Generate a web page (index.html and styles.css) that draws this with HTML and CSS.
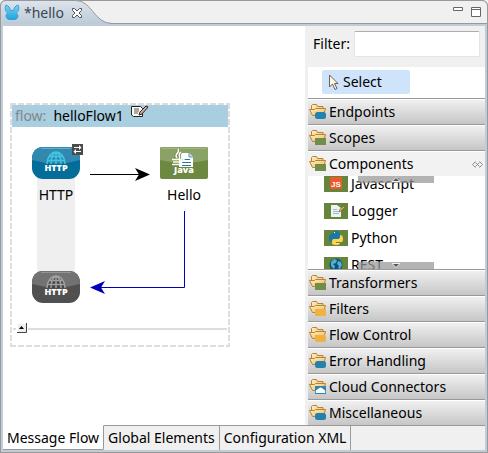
FILE: index.html
```html
<!DOCTYPE html>
<html lang="en">
<head>
<meta charset="utf-8">
<title>hello</title>
<link rel="stylesheet" href="styles.css">
</head>
<body>
<svg class="defs" aria-hidden="true">
  <defs>
    <linearGradient id="folderFill" x1="0" y1="0" x2="1" y2="1"><stop offset="0" stop-color="#fff0c4"/><stop offset="1" stop-color="#ecb95e"/></linearGradient>
    <linearGradient id="tabFill" x1="0" y1="0" x2="0" y2="1"><stop offset="0" stop-color="#dde4ec"/><stop offset="1" stop-color="#bccad8"/></linearGradient>
    <linearGradient id="muleFill" x1="0" y1="0" x2="0" y2="1"><stop offset="0" stop-color="#7bd0f2"/><stop offset="1" stop-color="#1ba5e4"/></linearGradient>
    <symbol id="folder" viewBox="0 0 18 16">
      <path d="M2.500 10V1.500l1-1h4l1 2h5.500v3" fill="url(#folderFill)" stroke="#b98235"/>
      <path d="M.5 5.500h5l1-1h10l-2 7H3.500z" fill="url(#folderFill)" stroke="#b98235"/>
    </symbol>
    <symbol id="globe" viewBox="0 0 20 14">
      <path d="M1 13a9 12 0 0 1 18 0M10 1v12M10 1c-5 2-5 8-5 12M10 1c5 2 5 8 5 12M3 5.500h14M1 9.500h18" fill="none" stroke="currentColor" stroke-width="1.500"/>
    </symbol>
  </defs>
</svg>
<div class="window">
  <header class="titlebar">
    <div class="tab">
      <svg class="tab-shape" width="116" height="24" viewBox="0 0 116 24" aria-hidden="true"><path d="M0 24V6Q1 .5 6 .5H76C92 .5 94 23.500 112 23.500H116V24z" fill="url(#tabFill)"/><path d="M.5 24V6Q1 .5 6 .5H76C92 .5 94 23.500 112 23.500H116" fill="none" stroke="#999"/></svg>
      <svg class="mule" width="16" height="17" viewBox="0 0 16 17" aria-hidden="true"><path d="M2 1C4.500 1.500 6 4 6.500 6.500H9.500C10 4 11.500 1.500 14 1C15.500 4 15 7 12.500 9L14 11.500L13.500 14L11.500 15.500H4.500L2.500 14L2 11.500L3.500 9C1 7 .5 4 2 1z" fill="url(#muleFill)" stroke="#3c9fcb"/></svg>
      <span class="tab-title">*hello</span>
      <button class="icon-button" aria-label="Close"><svg width="12" height="12" viewBox="0 0 12 12"><path d="M1.500 1.500h2L6 4l2.500-2.500h2v2L8 6l2.500 2.500v2h-2L6 8l-2.500 2.500h-2v-2L4 6 1.500 3.500z" fill="#fff" stroke="#555"/></svg></button>
    </div>
    <div class="window-buttons">
      <button class="icon-button" aria-label="Minimize"><svg width="10" height="11" viewBox="0 0 10 11"><path d="M.5 .5h9v3h-9z" fill="#fff" stroke="#666"/></svg></button>
      <button class="icon-button" aria-label="Maximize"><svg width="10" height="11" viewBox="0 0 10 11"><path d="M.5 .5h9v9h-9zM.5 2.500h9" fill="#fff" stroke="#666"/></svg></button>
    </div>
  </header>
  <main class="editor">
    <section class="canvas">
      <div class="flow">
        <div class="flow-head"><span class="flow-kind">flow:</span><span>helloFlow1</span>
          <svg class="edit" width="18" height="13" viewBox="0 0 18 13" aria-hidden="true"><path d="M.5 1.500h9l2 2v8H2.500L.5 10z" fill="#fffff0" stroke="#222"/><path d="M3 4h5M3 6h5M3 8h4" stroke="#555"/><path d="M8 10L9 7 15 1 17 2 11 9z" fill="#d9a9a5" stroke="#222"/></svg>
        </div>
        <div class="flow-body">
          <svg class="wires" width="216" height="200" viewBox="0 0 216 200" aria-hidden="true">
            <path d="M78 47.500H134" stroke="#000"/><path d="M138 47.500L123 41l4 6.500-4 6.500z" fill="#000"/>
            <path d="M172.500 84V160.500H82" fill="none" stroke="#0000b8"/><path d="M78 160.500L93 154l-4 6.500 4 6.500z" fill="#0000b8"/>
          </svg>
          <div class="lane"></div>
          <div class="node inbound">
            <svg width="48" height="32" viewBox="0 0 48 32" aria-hidden="true"><rect width="48" height="32" rx="11" fill="#056d99"/><path d="M0 22V11Q1 0 11 0H37Q47 0 48 11V13Q24 20 0 13z" fill="#3289b0"/><path d="M9 1.500H39" stroke="#6eadc8"/><svg x="14" y="4" width="20" height="14" color="#3fc5e1"><use href="#globe"/></svg><text x="24" y="24" class="glyph-label">HTTP</text></svg>
            <svg class="badge" width="11" height="11" viewBox="0 0 11 11" aria-hidden="true"><path d="M0 0h11v11H0z" fill="#4b4b4b"/><path d="M2 3.500h5M4 7.500h5" stroke="#fff"/><path d="M7 1l2.500 2.500L7 6zM4 5L1.500 7.500 4 10z" fill="#fff"/></svg>
            <span>HTTP</span>
          </div>
          <div class="node java">
            <svg width="48" height="32" viewBox="0 0 48 32" aria-hidden="true"><rect width="48" height="32" rx="2" fill="#6c8841"/><path d="M0 13V2Q0 0 2 0H46Q48 0 48 2V13Q24 19 0 13z" fill="#8ba267"/><path d="M2 1.500H46" stroke="#a3b587"/><path d="M19 6H29L33 10V20H19z" fill="#fff"/><path d="M29 6v4h4" fill="#cbdce4" stroke="#669ab3"/><path d="M22 12.500h8M22 15.500h9M22 18.500h9" stroke="#27759c"/><path d="M18 2c3 4-5 5-1 9M21 5c-4 3 0 4-2 7" fill="none" stroke="#6c8841" stroke-width="3"/><path d="M18 2c3 4-5 5-1 9M21 5c-4 3 0 4-2 7" fill="none" stroke="#fff" stroke-width="1.500"/><path d="M12 12.500h9M13 15h8M12 17.500h10M21 12h3q0 3-4 3" fill="none" stroke="#f7faf0" stroke-width="1.500"/><text x="24" y="26" class="glyph-label java-label">Java</text></svg>
            <span>Hello</span>
          </div>
          <div class="node response">
            <svg width="48" height="32" viewBox="0 0 48 32" role="img" aria-label="HTTP response"><rect width="48" height="32" rx="11" fill="#505050"/><path d="M0 13V11Q1 0 11 0H37Q47 0 48 11V13Q24 20 0 13z" fill="#727272"/><path d="M9 1.500H39" stroke="#949494"/><path d="M15 17a9 12 0 0 1 18 0z" fill="#454545"/><svg x="14" y="4" width="20" height="14" color="#a0a0a0"><use href="#globe"/></svg><text x="24" y="24" class="glyph-label">HTTP</text></svg>
          </div>
        </div>
        <div class="flow-foot"><button class="collapse" aria-label="Collapse error handling"><svg width="10" height="10" viewBox="0 0 10 10"><path d="M0 0h10v10H0z" fill="#eee"/><path d="M.5 9V.5H9" fill="none" stroke="#fff"/><path d="M0 9.500H9.500V0" fill="none" stroke="#444"/><path d="M2 6l2.500-3L7 6z"/></svg></button></div>
      </div>
    </section>
    <aside class="palette">
      <div class="filter"><label for="filter">Filter:</label><input id="filter" type="text"></div>
      <div class="drawers">
        <div class="tools"><button class="select-tool"><svg width="12" height="17" viewBox="0 0 12 17" aria-hidden="true"><path d="M1.500 1v12l3-3 2.500 5.500 2-1L6.500 9.500H10z" fill="#fff8df" stroke="#69625a"/></svg>Select</button></div>
        <button class="drawer"><svg width="18" height="16" aria-hidden="true"><use href="#folder"/><rect x="6" y="8" width="11" height="7" rx="2.500" fill="#2480ad"/></svg>Endpoints</button>
        <button class="drawer"><svg width="18" height="16" aria-hidden="true"><use href="#folder"/><path d="M6 8h11v7H6z" fill="#718d49"/></svg>Scopes</button>
        <button class="drawer open"><svg width="18" height="16" aria-hidden="true"><use href="#folder"/><path d="M6 8h11v7H6z" fill="#718d49"/></svg>Components<svg class="pin" width="11" height="9" viewBox="0 0 11 9" aria-hidden="true"><path d="M3.500 1.500L.5 4.500l3 3M7.500 1.500l3 3-3 3M3.500 2.500l4 4M7.500 2.500l-4 4" fill="none" stroke="#8a8a8a"/></svg></button>
        <div class="list">
          <ul>
            <li><svg width="24" height="16" viewBox="0 0 24 16" aria-hidden="true"><path d="M0 0h24v16H0z" fill="#66843c"/><path d="M6 1h12v12H6z" fill="#ed592a"/><text x="12" y="11" class="js-label">JS</text></svg>Javascript</li>
            <li><svg width="24" height="16" viewBox="0 0 24 16" aria-hidden="true"><path d="M0 0h24v16H0z" fill="#66843c"/><path d="M7 2h6l4 3v9H7z" fill="#eef4f6"/><path d="M9 6.500h4M9 8.500h6M9 10.500h6" stroke="#a0bac5"/><path d="M15 9l1-3 4-3 1 1-4 4z" fill="#e9b44b" stroke="#59492b" stroke-width=".5"/></svg>Logger</li>
            <li><svg width="24" height="16" viewBox="0 0 24 16" aria-hidden="true"><path d="M0 0h24v16H0z" fill="#66843c"/><path d="M8 4q0-3 4-3t4 3v3q0 2-2 2h-4q-2 0-2 3Q5 12 5 8t3-4h4V3z" fill="#1679a7"/><path d="M16 5q3 0 3 4t-3 3h-4v1h4q0 2-4 2t-4-2v-2q0-2 2-2h4q2 0 2-2z" fill="#ffd34d"/><path d="M10 2.500h1M13 13.500h1" stroke="#fff"/></svg>Python</li>
            <li><svg width="24" height="16" viewBox="0 0 24 16" aria-hidden="true"><path d="M0 0h24v16H0z" fill="#66843c"/><circle cx="12" cy="8" r="6.500" fill="#075379"/><path d="M7 5l3-3 3 1-1 3-3 1 2 2-1 3-3-3zM14 4l3 1 1 3-2 4-2-1 1-2-2-2z" fill="#58aed0"/></svg>REST</li>
          </ul>
          <button class="scroll up" aria-label="Scroll up"><svg width="8" height="5" viewBox="0 0 8 5"><path d="M0 4.500L4 .5l4 4z" fill="#555" stroke="#eee"/></svg></button>
          <button class="scroll down" aria-label="Scroll down"><svg width="8" height="5" viewBox="0 0 8 5"><path d="M0 .5L4 4.500l4-4z" fill="#555" stroke="#eee"/></svg></button>
        </div>
        <button class="drawer"><svg width="18" height="16" aria-hidden="true"><use href="#folder"/><path d="M6 8h11v7H6z" fill="#718d49"/></svg>Transformers</button>
        <button class="drawer"><svg width="18" height="16" aria-hidden="true"><use href="#folder"/><path d="M6 8h11v7H6z" fill="#efb140"/></svg>Filters</button>
        <button class="drawer"><svg width="18" height="16" aria-hidden="true"><use href="#folder"/><path d="M6 8h10l1 2v3l-1 2H7l-1-2z" fill="#efb140"/></svg>Flow Control</button>
        <button class="drawer"><svg width="18" height="16" aria-hidden="true"><use href="#folder"/><rect x="6" y="8" width="11" height="7" rx="2.500" fill="#2480ad"/></svg>Error Handling</button>
        <button class="drawer"><svg width="18" height="16" aria-hidden="true"><use href="#folder"/><path d="M6 7h11v8H6z" fill="#2c88ae"/><path d="M7 14q-1-3 2-4 3-3 5 0 3 1 2 4z" fill="#fff"/></svg>Cloud Connectors</button>
        <button class="drawer"><svg width="18" height="16" aria-hidden="true"><use href="#folder"/><rect x="6" y="8" width="11" height="7" rx="2.500" fill="#2480ad"/></svg>Miscellaneous</button>
      </div>
    </aside>
  </main>
  <nav class="pages">
    <button class="page current">Message Flow</button>
    <button class="page">Global Elements</button>
    <button class="page">Configuration XML</button>
    <div class="rest"></div>
  </nav>
</div>
</body>
</html>
```

FILE: styles.css
```css
* { box-sizing: border-box; }
body {
  margin: 0;
  background: #f0f0f0;
  color: #000;
  font: 14px/20px "Noto Sans", "Open Sans", sans-serif;
}
button {
  margin: 0;
  padding: 0;
  border: 0;
  background: none;
  color: inherit;
  font: inherit;
}
svg { display: block; flex: none; }
.defs { position: absolute; width: 0; height: 0; }
.window {
  display: flex;
  flex-direction: column;
  min-height: 100vh;
  border: 1px solid #999;
  border-top: 0;
  border-radius: 6px 6px 0 0;
  background: #bfccda;
}
.titlebar {
  display: flex;
  justify-content: space-between;
  height: 24px;
  margin: 0 -1px;
  border: 1px solid #999;
  border-radius: 6px 6px 0 0;
  background: #f0f0f0;
}
.tab {
  position: relative;
  display: flex;
  align-items: center;
  gap: 4px;
  margin: -1px;
  padding: 1px 36px 0 4px;
  height: 24px;
}
.tab-shape { position: absolute; left: 0; top: 0; }
.mule, .tab-title, .tab .icon-button { position: relative; }
.tab-title { color: #3e4650; }
.tab .icon-button { margin-left: 3px; }
.window-buttons { display: flex; gap: 8px; padding: 4px 6px; }
.editor {
  display: flex;
  flex: 1;
  margin: 2px 2px 0;
  background: #fff;
}
.canvas { flex: 1; padding: 77px 7px 8px; }
.flow {
  width: 220px;
  padding: 2px;
  background:
    repeating-linear-gradient(90deg, #ddd 0 6px, transparent 6px 8px) 0 0 / 100% 2px no-repeat,
    repeating-linear-gradient(90deg, #ddd 0 6px, transparent 6px 8px) 0 100% / 100% 2px no-repeat,
    repeating-linear-gradient(#ddd 0 6px, transparent 6px 8px) 0 0 / 2px 100% no-repeat,
    repeating-linear-gradient(#ddd 0 6px, transparent 6px 8px) 100% 0 / 2px 100% no-repeat;
}
.flow-head {
  display: flex;
  align-items: center;
  gap: 7px;
  height: 22px;
  padding-left: 3px;
  background: #a8cee0;
}
.flow-kind { color: #80878c; }
.edit { align-self: flex-start; }
.flow-body { position: relative; height: 196px; }
.wires { position: absolute; left: 0; top: 0; }
.lane {
  position: absolute;
  left: 25px;
  top: 40px;
  width: 38px;
  height: 120px;
  background: #efefef;
}
.node {
  position: absolute;
  display: flex;
  flex-direction: column;
  align-items: center;
  gap: 6px;
  width: 48px;
}
.inbound { left: 20px; top: 20px; }
.java { left: 148px; top: 20px; }
.response { left: 20px; top: 144px; }
.badge { position: absolute; right: -3px; top: -3px; }
.glyph-label {
  fill: #fff;
  font: 800 9px "Open Sans", sans-serif;
  text-anchor: middle;
}
.java-label { font-size: 9px; }
.js-label {
  fill: #fff;
  font: 700 8px "Liberation Sans", sans-serif;
  text-anchor: middle;
}
.flow-foot {
  height: 22px;
  padding-left: 5px;
  background: linear-gradient(#ddd, #ddd) 50% 5px / calc(100% - 2px) 2px no-repeat;
}
.collapse { display: block; outline: 1px solid #fff; }
.palette {
  width: 180px;
  padding-left: 3px;
  background: #f0f0f0;
}
.filter {
  display: flex;
  align-items: center;
  gap: 4px;
  height: 41px;
  padding: 0 5px 5px;
}
.filter input {
  flex: 1;
  min-width: 0;
  height: 26px;
  border: 1px solid #e1e4ea;
  border-top-color: #abadb3;
  border-radius: 2px;
  background: #fff;
  font: inherit;
}
.tools { height: 31px; padding: 3px 14px; background: #fff; }
.select-tool {
  display: flex;
  align-items: center;
  gap: 3px;
  width: 88px;
  height: 24px;
  padding-left: 6px;
  border-radius: 2px;
  background: #cfe3fb;
}
.drawer {
  display: flex;
  align-items: center;
  gap: 2px;
  width: 100%;
  height: 26px;
  padding: 1px 2px 0 1px;
  border-top: 1px solid #999;
  background: linear-gradient(#f2f2f2, #c6c6c6);
  box-shadow: inset 0 1px #fff;
}
.drawer.open { background: #f2f2f2; }
.pin { margin-left: auto; }
.list {
  position: relative;
  height: 93px;
  overflow: hidden;
  background: #fff;
}
.list ul { margin: -6px 0 0; padding: 0; list-style: none; }
.list li {
  display: flex;
  align-items: center;
  gap: 3px;
  height: 27px;
  padding-left: 16px;
}
.scroll {
  position: absolute;
  left: 50px;
  display: flex;
  align-items: center;
  justify-content: center;
  width: 76px;
  height: 7px;
  background: rgba(150, 150, 150, 0.72);
}
.up { top: 0; }
.down { bottom: 0; }
.pages { display: flex; margin: 0 2px 2px; }
.page, .rest {
  height: 25px;
  border-top: 1px solid #999;
  background: #f0f0f0;
}
.page {
  padding: 0 4px;
  border-right: 1px solid #999;
  white-space: nowrap;
}
.page.current {
  border-top-color: #fff;
  border-bottom: 1px solid #999;
  border-bottom-right-radius: 2px;
  background: #fff;
}
.rest { flex: 1; }
```
